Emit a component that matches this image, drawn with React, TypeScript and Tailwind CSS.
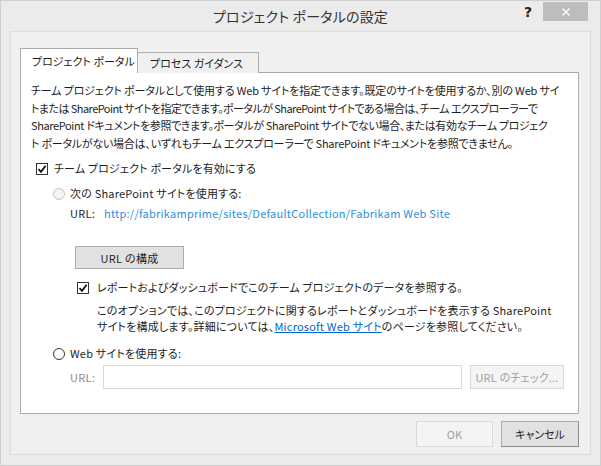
import React from 'react';

const font = "font-['Noto_Sans_CJK_JP',_sans-serif] [font-feature-settings:'palt']";

function CheckBox() {
  return (
    <span className="w-[12px] h-[12px] border border-[#333] bg-white flex items-center justify-center shrink-0">
      <svg width="10" height="10" viewBox="0 0 10 10">
        <path d="M1.5 5.2 L4 7.8 L8.6 1.8" stroke="#111" strokeWidth="1.8" fill="none" />
      </svg>
    </span>
  );
}

function Radio({ disabled }: { disabled?: boolean }) {
  return (
    <span
      className={
        disabled
          ? 'w-[12px] h-[12px] rounded-full border border-[#c4c4c4] bg-[#f4f4f4] shrink-0'
          : 'w-[12px] h-[12px] rounded-full border border-[#333] bg-white shrink-0'
      }
    />
  );
}

export default function App() {
  return (
    <div className={`w-[601px] h-[466px] bg-[#ebebeb] border border-[#cfcfcf] flex flex-col text-[#1e1e1e] ${font}`}>
      {/* Title bar */}
      <div className="h-[30px] grid grid-cols-[1fr_auto_1fr] items-start">
        <div />
        <div className="pt-[5px] text-[14px] leading-[20px] text-[#333] tracking-[0.2px]">プロジェクト ポータルの設定</div>
        <div className="flex justify-end items-start pr-[12px] pt-[1px]">
          <span className="mt-[2px] mr-[11px] text-[14px] font-bold leading-[16px] text-[#222] font-['DejaVu_Sans',_sans-serif]">?</span>
          <span className="w-[45px] h-[19px] bg-[#bdbdbd] flex items-center justify-center">
            <svg width="10" height="10" viewBox="0 0 10 10">
              <path d="M1.5 1.5 L8.5 8.5 M8.5 1.5 L1.5 8.5" stroke="#fff" strokeWidth="1.4" />
            </svg>
          </span>
        </div>
      </div>

      {/* Inner panel */}
      <div className="mx-[9px] mb-[10px] flex-1 bg-[#f0f0f0] border border-[#dcdcdc] pl-[9px] pr-[11px] pt-[16px] flex flex-col text-[11px]">
        {/* Tabs */}
        <div className="flex items-end h-[25px] relative z-10">
          <div className="w-[118px] h-[25px] bg-white border border-b-0 border-[#acacac] pl-[11px] pt-[4px] leading-[17px] whitespace-nowrap">
            プロジェクト ポータル
          </div>
          <div className="w-[121px] h-[21px] bg-[#f0f0f0] border border-l-0 border-b-0 border-[#acacac] pl-[12px] pt-[2px] leading-[17px] whitespace-nowrap">
            プロセス ガイダンス
          </div>
        </div>

        {/* Tab content */}
        <div className="-mt-px h-[342px] bg-white border border-[#acacac] pl-[10px] pt-[9px]">
          <div className="leading-[17.5px] whitespace-nowrap">
            <p className="tracking-[-0.15px]">チーム プロジェクト ポータルとして使用する Web サイトを指定できます。既定のサイトを使用するか、別の Web サイ</p>
            <p className="tracking-[-0.55px]">トまたは SharePoint サイトを指定できます。ポータルが SharePoint サイトである場合は、チーム エクスプローラーで</p>
            <p className="tracking-[-0.38px]">SharePoint ドキュメントを参照できます。ポータルが SharePoint サイトでない場合、または有効なチーム プロジェク</p>
            <p className="tracking-[-0.24px]">ト ポータルがない場合は、いずれもチーム エクスプローラーで SharePoint ドキュメントを参照できません。</p>
          </div>

          <div className="mt-[8px] h-[17px] flex items-center ml-[5px] gap-[6px]">
            <CheckBox />
            <span className="tracking-[0.15px]">チーム プロジェクト ポータルを有効にする</span>
          </div>

          <div className="mt-[8px] h-[17px] flex items-center ml-[22px] gap-[5px]">
            <Radio disabled />
            <span className="tracking-[0.2px]">次の SharePoint サイトを使用する:</span>
          </div>

          <div className="mt-[3px] h-[17px] flex items-center ml-[39px]">
            <span className="w-[34px] tracking-[0.3px]">URL:</span>
            <span className="text-[#2f8fd8] tracking-[0.25px]">http://fabrikamprime/sites/DefaultCollection/Fabrikam Web Site</span>
          </div>

          <button className="mt-[24px] ml-[44px] w-[109px] h-[23px] bg-[#e1e1e1] border border-[#adadad] leading-[20px] flex items-center justify-center tracking-[0.3px]">
            URL の構成
          </button>

          <div className="mt-[10px] h-[17px] flex items-center ml-[46px] gap-[8px]">
            <CheckBox />
            <span className="tracking-[0.15px]">レポートおよびダッシュボードでこのチーム プロジェクトのデータを参照する。</span>
          </div>

          <div className="mt-[6px] ml-[66px] leading-[16px] whitespace-nowrap tracking-[0.2px]">
            <p>このオプションでは、このプロジェクトに関するレポートとダッシュボードを表示する SharePoint</p>
            <p>
              サイトを構成します。詳細については、
              <span className="text-[#0066cc] underline">Microsoft Web サイト</span>
              のページを参照してください。
            </p>
          </div>

          <div className="mt-[11px] h-[17px] flex items-center ml-[22px] gap-[5px]">
            <Radio />
            <span className="tracking-[0.2px]">Web サイトを使用する:</span>
          </div>

          <div className="mt-[3px] h-[24px] flex items-center ml-[39px]">
            <span className="w-[33px] text-[#8a8a8a] tracking-[0.3px]">URL:</span>
            <span className="w-[359px] h-[24px] bg-white border border-[#d9d9d9]" />
            <span className="ml-[8px] w-[94px] h-[24px] bg-[#f4f4f4] border border-[#d9d9d9] text-[#a0a0a0] flex items-center justify-center tracking-[0.2px]">
              URL のチェック...
            </span>
          </div>
        </div>

        {/* Footer buttons */}
        <div className="mt-[7px] flex justify-end gap-[8px]">
          <button className="w-[77px] h-[26px] bg-[#f4f4f4] border border-[#d9d9d9] text-[#a0a0a0]">OK</button>
          <button className="w-[78px] h-[26px] bg-[#e1e1e1] border border-[#adadad] border-b-[#8c8c8c] border-r-[#8c8c8c]">キャンセル</button>
        </div>
      </div>
    </div>
  );
}
